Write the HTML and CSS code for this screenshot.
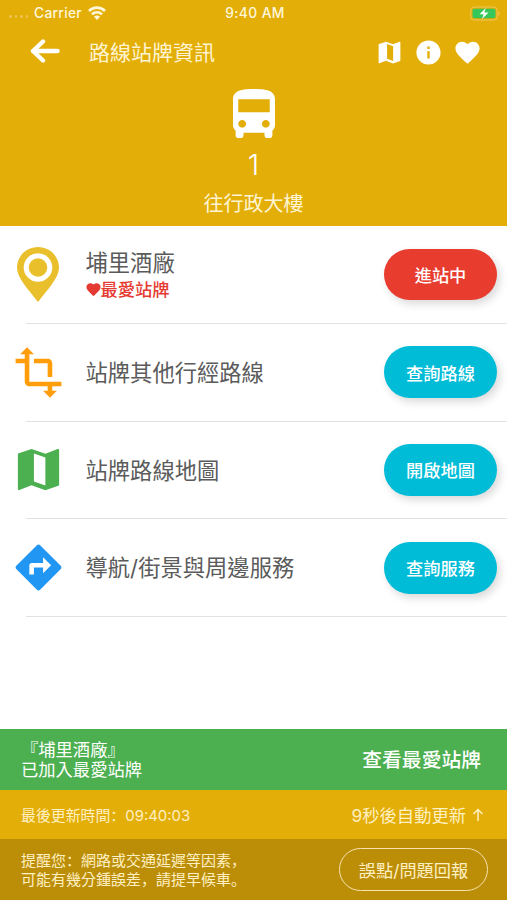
FILE: index.html
```html
<!DOCTYPE html>
<html lang="zh-Hant">
<head>
<meta charset="utf-8">
<title>路線站牌資訊</title>
<link rel="stylesheet" href="styles.css">
</head>
<body>
<svg class="defs" width="0" height="0">
  <symbol id="map" viewBox="0 0 24 24"><path d="M20.5 3l-.16.03L15 5.1 9 3 3.36 4.9c-.21.07-.36.25-.36.48V20.5c0 .28.22.5.5.5l.16-.03L9 18.9l6 2.1 5.64-1.9c.21-.07.36-.25.36-.48V3.500c0-.28-.22-.5-.5-.5zM15 19l-5-1.750V5l5 1.750V19z"/></symbol>
  <symbol id="heart" viewBox="0 0 24 24"><path d="M12 21.350l-1.450-1.320C5.400 15.360 2 12.280 2 8.500 2 5.420 4.420 3 7.500 3c1.740 0 3.410.81 4.500 2.090C13.090 3.810 14.760 3 16.500 3 19.580 3 22 5.420 22 8.500c0 3.780-3.400 6.860-8.550 11.540L12 21.350z"/></symbol>
</svg>
<div class="app">
  <header class="header">
    <div class="status">
      <div class="carrier">
        <span class="dots"><i></i><i></i><i></i><i></i></span>
        <span>Carrier</span>
        <svg class="wifi" viewBox="0 0 18 14"><path d="M1 5a11.200 11.200 0 0 1 16 0M4 8.300a7 7 0 0 1 10 0" fill="none" stroke="currentColor" stroke-width="2.600"/><path d="M9 13.900l-3-3.100a4.200 4.200 0 0 1 6 0z"/></svg>
      </div>
      <time>9:40 AM</time>
      <svg class="battery" viewBox="0 0 31 15"><rect x=".7" y="1" width="26.500" height="13" rx="3.500" fill="none" stroke="#efc65a" stroke-width="1"/><rect x="2.500" y="2.700" width="23" height="9.600" rx="2" fill="#35c759"/><path d="M28.500 5.300c1.800.7 1.800 3.700 0 4.400z" fill="#efc65a"/><path d="M15.800 2L9.500 8.300h4.100L12 13l6.600-6.500h-4.200z" fill="#fff"/></svg>
    </div>
    <nav class="bar">
      <svg class="back" viewBox="0 0 30 24"><path d="M27.500 12H3M13 2.500L3 12l10 9.500" fill="none" stroke="currentColor" stroke-width="4.400" stroke-linecap="round" stroke-linejoin="round"/></svg>
      <h1>路線站牌資訊</h1>
      <svg class="tool"><use href="#map"/></svg>
      <svg class="tool" viewBox="0 0 24 24"><path d="M12 2C6.480 2 2 6.480 2 12s4.480 10 10 10 10-4.480 10-10S17.520 2 12 2zm1 15h-2v-6h2v6zm0-8h-2V7h2v2z"/></svg>
      <svg class="tool"><use href="#heart"/></svg>
    </nav>
    <div class="route">
      <svg class="bus" viewBox="4 2 16 19" preserveAspectRatio="none"><path d="M4 16c0 .88.39 1.670 1 2.220V20c0 .55.45 1 1 1h1c.55 0 1-.45 1-1v-1h8v1c0 .55.45 1 1 1h1c.55 0 1-.45 1-1v-1.780c.61-.55 1-1.340 1-2.220V6c0-3.500-3.580-4-8-4s-8 .5-8 4v10zm3.500 1c-.83 0-1.500-.67-1.500-1.500S6.670 14 7.500 14s1.500.67 1.500 1.500S8.330 17 7.500 17zm9 0c-.83 0-1.500-.67-1.500-1.500s.67-1.500 1.500-1.500 1.500.67 1.500 1.500-.67 1.500-1.500 1.500zm1.500-6H6V6h12v5z"/></svg>
      <div class="number">1</div>
      <div class="bound">往行政大樓</div>
    </div>
  </header>
  <main class="list">
    <section class="row">
      <svg class="icon pin" viewBox="0 0 42 55"><path d="M21 0C9.300 0 0 9.200 0 20.500 0 31 11 42 21 55 31 42 42 31 42 20.500 42 9.200 32.700 0 21 0z" fill="#e9bf2c"/><circle cx="21" cy="20.500" r="11.800" fill="none" stroke="#fff" stroke-width="5"/></svg>
      <div class="label stop"><h2>埔里酒廠</h2><p class="favorite"><svg><use href="#heart"/></svg>最愛站牌</p></div>
      <button class="pill arriving">進站中</button>
    </section>
    <section class="row">
      <svg class="icon orange" viewBox="0 0 24 24"><path d="M22 18v-2H8V4h2L7 1 4 4h2v2H2v2h4v8c0 1.100.9 2 2 2h8v2h-2l3 3 3-3h-2v-2h4zM10 8h6v6h2V8c0-1.100-.9-2-2-2h-6v2z"/></svg>
      <div class="label"><h2>站牌其他行經路線</h2></div>
      <button class="pill">查詢路線</button>
    </section>
    <section class="row">
      <svg class="icon green"><use href="#map"/></svg>
      <div class="label"><h2>站牌路線地圖</h2></div>
      <button class="pill">開啟地圖</button>
    </section>
    <section class="row">
      <svg class="icon blue" viewBox="0 0 24 24"><path d="M21.710 11.290l-9-9c-.39-.39-1.020-.39-1.410 0l-9 9c-.39.39-.39 1.020 0 1.410l9 9c.39.39 1.020.39 1.410 0l9-9c.39-.38.39-1.010 0-1.410zM14 14.500V12h-4v3H8v-4c0-.55.45-1 1-1h5V7.500l3.500 3.500-3.500 3.500z"/></svg>
      <div class="label"><h2>導航<span class="slash">/</span>街景與周邊服務</h2></div>
      <button class="pill">查詢服務</button>
    </section>
  </main>
  <div class="notice"><p>『埔里酒廠』<br>已加入最愛站牌</p><a>查看最愛站牌</a></div>
  <div class="refresh"><p>最後更新時間<span class="mark" lang="zh-Hans">：</span>09:40:03</p><div class="countdown">9秒後自動更新 <svg viewBox="0 0 12 14"><path d="M6 13V1.500M1.500 6L6 1.500 10.500 6" fill="none" stroke="currentColor" stroke-width="1.500"/></svg></div></div>
  <footer class="reminder">
    <div>
      <p>提醒您<span class="mark" lang="zh-Hans">：</span>網路或交通延遲等因素<span class="mark" lang="zh-Hans">，</span></p>
      <p>可能有幾分鍾誤差<span class="mark" lang="zh-Hans">，</span>請提早候車<span class="mark" lang="zh-Hans">。</span></p>
    </div>
    <button class="report">誤點/問題回報</button>
  </footer>
</div>
</body>
</html>
```
FILE: styles.css
```css
* { box-sizing: border-box; }
body, h1, h2, p { margin: 0; font-weight: 400; }
body {
  font-family: Inter, "Noto Sans CJK TC", sans-serif;
  background: #fff;
  color: #fff;
}
svg { display: block; fill: currentColor; flex: none; }
.defs { position: absolute; }
button { font-family: inherit; color: #fff; padding: 0; border: 0; white-space: nowrap; }
.app { width: 507px; height: 900px; display: flex; flex-direction: column; overflow: hidden; }

.header { height: 225.500px; background: #e3ae07; flex: none; }
.status {
  height: 26px;
  padding: 0 6px 0 9px;
  display: grid;
  grid-template-columns: 1fr auto 1fr;
  align-items: center;
  font-size: 13.800px;
  font-weight: 500;
  color: #fff7dc;
}
.status time { letter-spacing: .4px; }
.carrier { display: flex; align-items: center; letter-spacing: .3px; }
.dots { display: flex; gap: 3px; width: 25px; padding-top: 7px; }
.dots i { width: 2.500px; height: 2.500px; border-radius: 50%; background: #ecc352; }
.wifi { width: 18px; height: 14px; margin-left: 6px; }
.battery { width: 31px; height: 15px; justify-self: end; }
.bar { height: 53px; padding: 0 25px 0 30px; display: flex; align-items: center; }
.back { width: 30px; height: 24px; margin-top: -4px; }
h1 { flex: 1; margin-left: 29px; font-size: 21px; line-height: 30px; color: #fff4d2; }
.tool { width: 29px; height: 29px; margin-left: 10px; }
.route { display: flex; flex-direction: column; align-items: center; padding-top: 10px; }
.bus { width: 42px; height: 49px; }
.number { font-weight: 300; font-size: 29px; line-height: 36px; margin-top: 9px; }
.bound { font-size: 20px; line-height: 30px; margin-top: 6px; color: #fff4d2; }

.list { flex: 1; padding-top: .5px; }
.row {
  height: 97.800px;
  margin-left: 26px;
  padding: 0 10px 0 0;
  border-bottom: 1px solid #e2e2e2;
  display: flex;
  align-items: center;
}
.icon { width: 55px; height: 55px; margin-left: -15.500px; margin-right: 20px; }
.pin { width: 42px; margin-left: -9px; margin-right: 26.500px; }
.orange { color: #ff9d0a; }
.green { color: #4caf50; }
.blue { color: #2196f3; }
.label { flex: 1; margin-top: -2px; }
.stop { margin-top: 1px; }
h2 { font-family: "Noto Sans CJK TC", sans-serif; font-size: 22.300px; line-height: 30px; color: #5b5b5b; }
.slash { font-family: Inter, sans-serif; }
.favorite { display: flex; align-items: center; font-size: 17.300px; font-weight: 500; line-height: 27px; color: #e53a31; }
.favorite svg { width: 17px; height: 17px; margin: 0 -1px 0 -1px; }
.pill {
  width: 113px;
  height: 51.500px;
  border-radius: 26px;
  background: #00bcd7;
  box-shadow: 3px 4px 8px #00000026;
  font-size: 17.200px;
  font-weight: 500;
}
.arriving { background: #e83c2f; }

.notice, .refresh, .reminder { flex: none; display: flex; justify-content: space-between; align-items: center; padding-left: 21px; }
.notice { height: 61px; padding-right: 26px; background: #4caf50; font-size: 17.300px; font-weight: 500; line-height: 20.500px; }
.notice p { padding-top: 1px; }
.notice a { font-size: 19.800px; padding-top: 1px; }
.refresh { height: 49px; padding-right: 23px; background: #e3ae07; font-size: 14.900px; color: #fff0c2; }
.countdown { display: flex; align-items: center; font-size: 17.300px; }
.countdown svg { width: 12px; height: 14px; margin-left: 6px; }
.reminder { height: 61px; padding-right: 19px; background: #bc8e08; font-size: 15px; color: #fff0c2; }
.reminder p { line-height: 17.500px; }
.mark { display: inline-block; font-family: "Noto Sans CJK SC", sans-serif; line-height: 17px; }
.report { width: 149px; height: 43px; border: 1.500px solid #f7e3ae; border-radius: 22px; background: none; color: #fff0c2; font-size: 17.200px; }
```
